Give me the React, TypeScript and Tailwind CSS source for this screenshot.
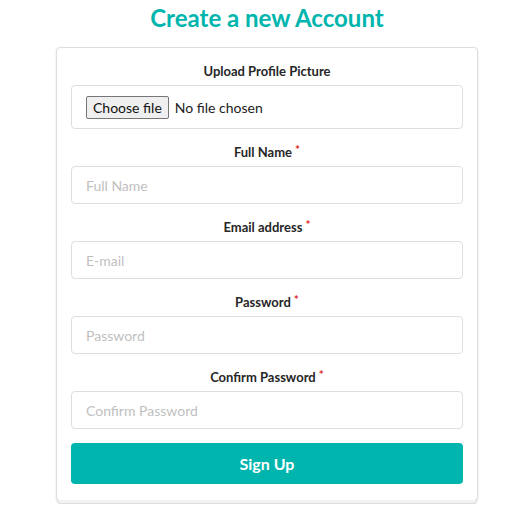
import { useRef, useState } from "react";

const fields = [
  { label: "Full Name", placeholder: "Full Name", type: "text" },
  { label: "Email address", placeholder: "E-mail", type: "email" },
  { label: "Password", placeholder: "Password", type: "password" },
  { label: "Confirm Password", placeholder: "Confirm Password", type: "password" },
];

export default function App() {
  const [values, setValues] = useState<Record<string, string>>({});
  const [fileName, setFileName] = useState<string | null>(null);
  const fileRef = useRef<HTMLInputElement>(null);

  return (
    <main className="min-h-screen bg-white font-['Lato','Liberation_Sans',sans-serif] text-[14px] text-[#212121]">
      <div className="ml-[56px] w-[422px] pt-[2px]">
        <h2 className="text-center text-[24px] font-bold leading-[31px] text-[#00b5ad] mb-[14px]">
          Create a new Account
        </h2>

        <form
          onSubmit={(e) => e.preventDefault()}
          className="relative bg-white border border-[#dedede] rounded-[4px] shadow-[0_1px_2px_0_rgba(34,36,38,0.15)] p-[14px] pb-[16px] after:absolute after:left-0 after:-bottom-[4px] after:w-full after:h-[4px] after:border-b after:border-x after:border-[#dedede] after:bg-[#f2f2f2] after:rounded-b-[3px]"
        >
          <div className="mb-[14px]">
            <label className="block text-center text-[13px] font-bold leading-[19px] mb-1 text-[#262626]">
              Upload Profile Picture
            </label>
            <div className="border border-[#dedede] rounded-[4px] px-[14px] h-[44px] flex items-center">
              <input
                ref={fileRef}
                type="file"
                className="hidden"
                onChange={(e) => setFileName(e.target.files?.[0]?.name ?? null)}
              />
              <button
                type="button"
                onClick={() => fileRef.current?.click()}
                className="h-[23px] px-[6px] border border-[#767676] rounded-[2px] bg-[#efefef] text-[14px] leading-[17px] text-[#111] mr-[6px]"
              >
                Choose file
              </button>
              <span className="text-[14px]">{fileName ?? "No file chosen"}</span>
            </div>
          </div>

          {fields.map((f) => (
            <div key={f.label} className="mb-[14px]">
              <label className="block text-center text-[13px] font-bold leading-[19px] mb-1 text-[#262626]">
                {f.label}
                <span className="inline-block align-top -mt-[3px] ml-[3px] text-[12px] text-[#db2828]">*</span>
              </label>
              <input
                type={f.type}
                placeholder={f.placeholder}
                value={values[f.label] ?? ""}
                onChange={(e) => setValues({ ...values, [f.label]: e.target.value })}
                className="block w-full h-[38px] border border-[#dedede] rounded-[4px] px-[14px] text-[14px] placeholder:text-[#bfbfbf] focus:outline-none focus:border-[#85b7d9]"
              />
            </div>
          ))}

          <button
            type="submit"
            className="block w-full h-[41px] mt-[1px] rounded-[4px] bg-[#00b5ad] text-white text-[16px] font-bold hover:bg-[#009c95]"
          >
            Sign Up
          </button>
        </form>
      </div>
    </main>
  );
}
